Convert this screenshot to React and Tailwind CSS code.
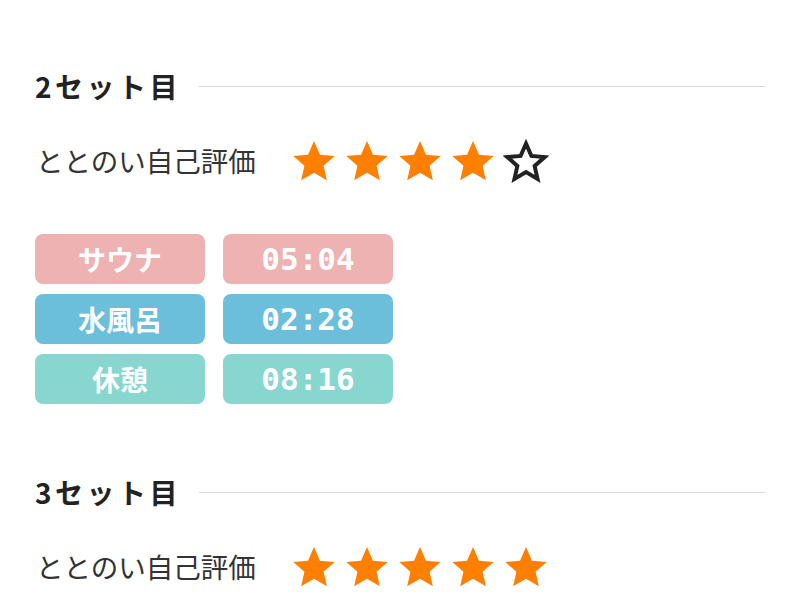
import React from "react";

const sets = [
  {
    no: 2,
    rating: 4,
    rows: [
      { label: "サウナ", time: "05:04", color: "bg-[#eeb2b2]" },
      { label: "水風呂", time: "02:28", color: "bg-[#6bbfdb]" },
      { label: "休憩", time: "08:16", color: "bg-[#87d6cf]" },
    ],
  },
  { no: 3, rating: 5, rows: [] },
];

const STAR = "M12 1.6l3.1 7.1 7.7.7-5.8 5.1 1.7 7.6L12 18.1l-6.7 4 1.7-7.6L1.2 9.4l7.7-.7z";

const Star = ({ filled }) => (
  <svg viewBox="0 0 24 24" className="w-[46px] h-[46px]">
    {filled ? (
      <path d={STAR} fill="#ff7f00" />
    ) : (
      <path d={STAR} fill="none" stroke="#222" strokeWidth="2.3" strokeLinejoin="miter" transform="translate(1.2 1.5) scale(0.9)" />
    )}
  </svg>
);

const SetBlock = ({ set }) => (
  <div className="mb-[68px]">
    <div className="flex items-center h-[40px]">
      <h2 className="text-[28px] font-bold text-[#222] tracking-[3.5px] leading-none whitespace-nowrap">
        {set.no}セット目
      </h2>
      <div className="flex-1 h-px bg-[#d9d9d9] ml-[18px]" />
    </div>
    <div className="flex items-center h-[50px] mt-[30px]">
      <span className="text-[27.5px] text-[#333] leading-none w-[256px] pl-[1px]">ととのい自己評価</span>
      <div className="flex gap-[7px]">
        {[1, 2, 3, 4, 5].map((i) => (
          <Star key={i} filled={i <= set.rating} />
        ))}
      </div>
    </div>
    {set.rows.length > 0 && (
      <div className="mt-[48px] flex flex-col gap-[10px]">
        {set.rows.map((r) => (
          <div key={r.label} className="flex gap-[18px]">
            <div className={`${r.color} w-[170px] h-[50px] rounded-[8px] flex items-center justify-center text-white font-bold text-[28px]`}>
              {r.label}
            </div>
            <div
              className={`${r.color} w-[170px] h-[50px] rounded-[8px] flex items-center justify-center text-white font-bold text-[31px]`}
              style={{ fontFamily: '"DejaVu Sans Mono", "Liberation Mono", monospace' }}
            >
              {r.time}
            </div>
          </div>
        ))}
      </div>
    )}
  </div>
);

export default function App() {
  return (
    <div
      className="w-[800px] h-[600px] overflow-hidden bg-white px-[35px] pt-[66px]"
      style={{ fontFamily: '"Noto Sans CJK JP", "Noto Sans", sans-serif' }}
    >
      {sets.map((s) => (
        <SetBlock key={s.no} set={s} />
      ))}
    </div>
  );
}
